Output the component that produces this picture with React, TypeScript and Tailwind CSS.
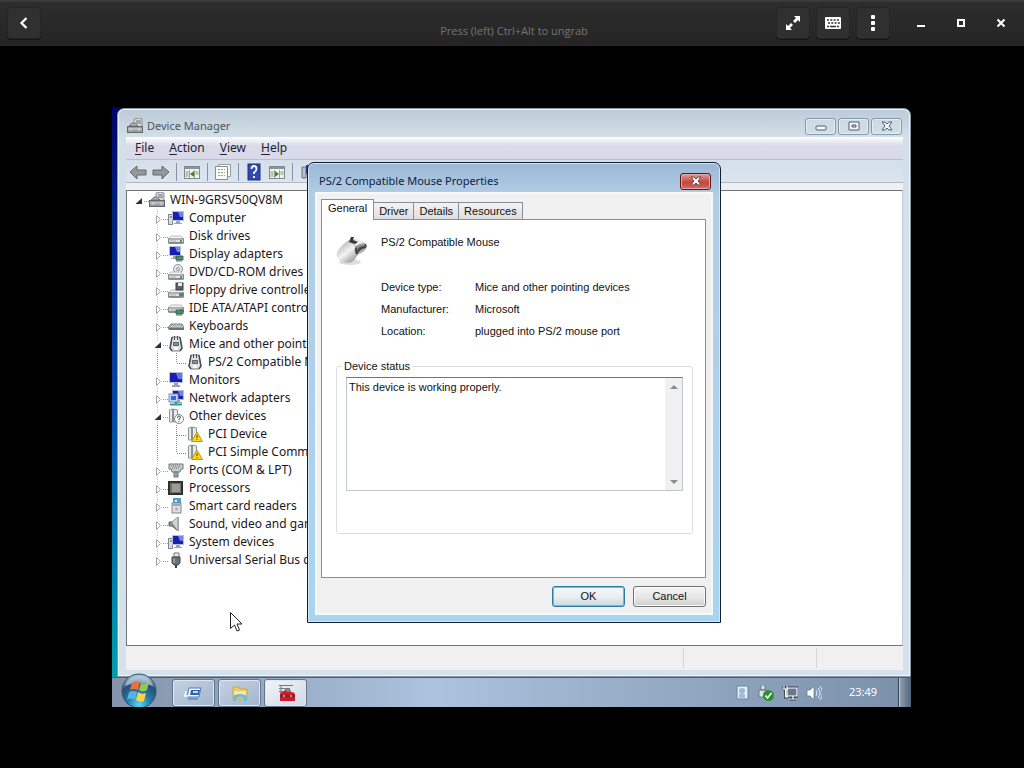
import React from "react";

type IconName =
  | "server" | "computer" | "disk" | "display" | "dvd" | "floppy" | "ide" | "keyboard" | "mouse"
  | "monitor" | "network" | "unknown" | "warning" | "port" | "cpu" | "card" | "sound" | "usb";

const Screen = ({ x = 3, y = 1 }: { x?: number; y?: number }) => (
  <g transform={`translate(${x} ${y})`}>
    <rect width="12" height="10" fill="#b4c0dc" />
    <rect x="1" y="1" width="10" height="8" fill="#1a1fb0" />
    <path d="M6 1h5v5H8z" fill="#6d86e6" />
    <path d="M4 10h4v2h2v1H2v-1h2z" fill="#97a3ad" />
  </g>
);

const Drive = ({ y = 8 }: { y?: number }) => (
  <g transform={`translate(0 ${y})`}>
    <path d="M3 0h10l3 3H0z" fill="#f4f5f5" stroke="#9da1a3" strokeWidth=".7" />
    <rect x=".5" y="3" width="15" height="4" fill="#dfe2e3" stroke="#7f8487" />
    <path d="M1 7h14" stroke="#5d6265" />
    <path d="M2 5h6" stroke="#aab0b3" />
    <rect x="12" y="4" width="2" height="2" fill="#4e9660" />
  </g>
);

const Chip = () => <path d="M8 10h7v4H8zM9 14v2M11 14v2M13 14v2" fill="#4c8d6a" stroke="#2e5945" strokeWidth=".8" />;

const art: Record<IconName, React.ReactNode> = {
  server: (
    <>
      <path d="M7 1l5-1 3 1v9H7z" fill="#d5d9db" stroke="#8b9195" />
      <path d="M9 3h5M9 5h5" stroke="#6f767b" />
      <path d="M2 8l3-3h3l3 3z" fill="#aeb4b7" stroke="#777" />
      <rect x=".5" y="8.500" width="15" height="6" fill="#979da0" stroke="#62686b" />
      <path d="M1 11h14M4 10v3M12 10v3" stroke="#d8dcde" />
    </>
  ),
  computer: (
    <>
      <rect x=".5" y="4.500" width="4" height="10" fill="#d9dde1" stroke="#80868d" />
      <path d="M2 7h2" stroke="#444" />
      <Screen x={4} y={1} />
    </>
  ),
  disk: <Drive />,
  display: (
    <>
      <Screen x={1} y={0} />
      <Chip />
    </>
  ),
  dvd: (
    <>
      <circle cx="10" cy="5" r="4.500" fill="#e3e7e9" stroke="#8d9295" />
      <circle cx="10" cy="5" r="1.500" fill="#fff" stroke="#8d9295" />
      <Drive />
    </>
  ),
  floppy: (
    <>
      <Drive />
      <rect x="8" y="1" width="7" height="7" fill="#5b6369" stroke="#3c4247" />
      <path d="M10 1h4v3h-4z" fill="#e9eced" />
      <rect x="11" y="11" width="4" height="3" fill="#4c8d6a" />
    </>
  ),
  ide: (
    <>
      <Drive y={5} />
      <Chip />
    </>
  ),
  keyboard: (
    <>
      <path d="M3 6h11l2 4H0z" fill="#d4d8da" stroke="#70767a" />
      <path d="M0 10h16v2H1z" fill="#6c7276" />
      <path d="M3 7.500h11M2 9h12" stroke="#8a9094" strokeDasharray="1 1" />
    </>
  ),
  mouse: (
    <>
      <path d="M4 1h8l1 6 1 5-2 3H4l-2-3 1-5z" fill="#dde0e1" stroke="#7b8083" />
      <path d="M4 1L3 7l-1 5 2 3M12 1l1 6 1 5-2 3" stroke="#494e51" strokeWidth="1.500" fill="none" />
      <path d="M6 0h1v4H6zM9 0h1v4H9z" fill="#4c5154" />
      <path d="M5.500 6.500h5v3h-5z" fill="#8d9396" stroke="#5c6164" />
      <path d="M6 11h4v3H6z" fill="#f7f8f8" />
    </>
  ),
  monitor: (
    <>
      <rect x="1" width="14" height="11" fill="#b4c0dc" />
      <rect x="2" y="1" width="12" height="9" fill="#1a1fb0" />
      <path d="M8 1h6v6h-4z" fill="#5f79dd" />
      <path d="M6 11h4v2h2v2H4v-2h2z" fill="#97a3ad" />
    </>
  ),
  network: (
    <>
      <Screen x={4} y={0} />
      <rect x="1" y="4" width="9" height="8" fill="#c3d3ec" stroke="#7d96bd" />
      <rect x="3" y="6" width="5" height="4" fill="#4263d4" />
      <path d="M8 12v2M2 14.500h12" stroke="#2f9d81" strokeWidth="2" />
    </>
  ),
  unknown: (
    <>
      <path d="M1.500 14V2l3-1v13zM5.500 14V1l4 1v12z" fill="#e6e9ea" stroke="#8a9094" />
      <circle cx="11" cy="11" r="4.500" fill="#fff" stroke="#7a858f" />
      <path d="M9.500 10q0-2 1.500-2t1.500 1.300Q12.500 10.500 11 11v1M11 13v1" fill="none" stroke="#32485f" />
    </>
  ),
  warning: (
    <>
      <path d="M1.500 14V2l3-1v13zM5.500 14V1l4 1v12z" fill="#e6e9ea" stroke="#8a9094" />
      <path d="M10 6l5.500 9.500h-11z" fill="#f4d91d" stroke="#b39a08" strokeLinejoin="round" />
      <path d="M10 9v3M10 13v1" stroke="#4d4300" />
    </>
  ),
  port: (
    <>
      <path d="M1 2h14v5h-2l-1 3H4L3 7H1z" fill="#c9cdcf" stroke="#6f7578" />
      <path d="M3 4h10M4 6h8" stroke="#5c6265" strokeDasharray="1 1" />
      <path d="M6 10h4v5H6z" fill="#9ba0a3" stroke="#6f7578" />
    </>
  ),
  cpu: (
    <>
      <rect x=".5" y="1.500" width="14" height="13" fill="#33342f" stroke="#2d2e29" />
      <rect x="2" y="3" width="11" height="10" fill="#6e6f67" />
      <rect x="4" y="4" width="8" height="8" fill="#9b9c93" />
    </>
  ),
  card: (
    <>
      <path d="M5 0h8v6H5z" fill="#4b9fcb" />
      <path d="M7 2h2v2H7z" fill="#e4eef2" />
      <path d="M4 5h9v10H4z" fill="#dce0e2" stroke="#80878b" />
      <path d="M5 7h7" stroke="#646b6f" />
      <circle cx="8.500" cy="11" r="1.500" fill="#a6aeb3" />
    </>
  ),
  sound: (
    <>
      <path d="M1 6h3l6-5v14l-6-5H1z" fill="#888e92" stroke="#5f6568" />
      <path d="M4 6l6-5v14z" fill="#cfd3d6" />
      <path d="M10 1v14" stroke="#8e9498" />
    </>
  ),
  usb: (
    <>
      <path d="M6 1h5v4H6z" fill="#e7e9ea" stroke="#777" />
      <path d="M4 5h8v6l-2 2H6l-2-2z" fill="#6b7073" stroke="#404447" />
      <path d="M8 13v3" stroke="#404447" strokeWidth="2" />
      <path d="M6 6v5" stroke="#b9bdc0" />
    </>
  ),
};

const DeviceIcon = ({ name }: { name: IconName }) => (
  <svg className="size-4 shrink-0" viewBox="0 0 16 16" aria-hidden="true">{art[name]}</svg>
);

type Row = { label: string; icon: IconName; level: 0 | 1 | 2; open?: boolean; last?: boolean };

const rows: Row[] = [
  { label: "WIN-9GRSV50QV8M", icon: "server", level: 0, open: true },
  { label: "Computer", icon: "computer", level: 1 },
  { label: "Disk drives", icon: "disk", level: 1 },
  { label: "Display adapters", icon: "display", level: 1 },
  { label: "DVD/CD-ROM drives", icon: "dvd", level: 1 },
  { label: "Floppy drive controllers", icon: "floppy", level: 1 },
  { label: "IDE ATA/ATAPI controllers", icon: "ide", level: 1 },
  { label: "Keyboards", icon: "keyboard", level: 1 },
  { label: "Mice and other pointing devices", icon: "mouse", level: 1, open: true },
  { label: "PS/2 Compatible Mouse", icon: "mouse", level: 2, last: true },
  { label: "Monitors", icon: "monitor", level: 1 },
  { label: "Network adapters", icon: "network", level: 1 },
  { label: "Other devices", icon: "unknown", level: 1, open: true },
  { label: "PCI Device", icon: "warning", level: 2 },
  { label: "PCI Simple Communications Controller", icon: "warning", level: 2, last: true },
  { label: "Ports (COM & LPT)", icon: "port", level: 1 },
  { label: "Processors", icon: "cpu", level: 1 },
  { label: "Smart card readers", icon: "card", level: 1 },
  { label: "Sound, video and game controllers", icon: "sound", level: 1 },
  { label: "System devices", icon: "computer", level: 1 },
  { label: "Universal Serial Bus controllers", icon: "usb", level: 1, last: true },
];

const TreeRow = ({ row }: { row: Row }) => (
  <li className={`flex h-[18px] items-center ${row.level === 0 ? "pl-1.5" : "pl-[25px]"}`}>
    <svg className="h-[18px] w-4 shrink-0" viewBox="0 0 16 18" aria-hidden="true">
      {row.level > 0 && (
        <path d={row.last && row.level === 1 ? "M5.500 0v5" : "M5.500 0v18"} stroke={row.level === 2 ? "#888" : "#c4c4c4"} strokeDasharray="1 1" />
      )}
      {row.level < 2 && (
        <>
          <path d="M11 10.500h5" stroke="#999" strokeDasharray="1 1" />
          {row.open ? (
            <>
              <rect x="2" y="6" width="8" height="8" fill="#fff" />
              <path d="M9 7v6H2.500z" fill="#303030" />
            </>
          ) : (
            <>
              <rect x="3" y="5" width="7" height="11" fill="#fff" />
              <path d="M4.500 6.500v8l4-4z" fill="#fff" stroke="#a3a3a3" />
            </>
          )}
        </>
      )}
    </svg>
    {row.level === 2 && (
      <svg className="h-[18px] w-[19px] shrink-0" viewBox="0 0 19 18" aria-hidden="true">
        <path d={row.last ? "M8.500 0v10M9 10.500h9" : "M8.500 0v18M9 10.500h9"} stroke="#888" strokeDasharray="1 1" fill="none" />
      </svg>
    )}
    <DeviceIcon name={row.icon} />
    <span className="pl-[5px] whitespace-nowrap">{row.label}</span>
  </li>
);

const HeaderButton = ({ label, children }: { label: string; children: React.ReactNode }) => (
  <button aria-label={label} className="flex h-8 w-[34px] items-center justify-center rounded-sm border border-[#252525] bg-[#303030] text-white shadow-[0_1px_0_#151515]">
    {children}
  </button>
);

const PlainButton = ({ label, children }: { label: string; children: React.ReactNode }) => (
  <button aria-label={label} className="flex h-8 w-10 items-center justify-center text-white">{children}</button>
);

const ViewerHeader = () => (
  <header className="grid h-[46px] shrink-0 grid-cols-[1fr_auto_1fr] items-center border-t-2 border-[#3b3b3b] bg-linear-to-b from-[#2d2d2d] to-[#252525] pr-[3px] pb-0.5 pl-[7px]">
    <div className="flex">
      <HeaderButton label="Back">
        <svg className="size-4" viewBox="0 0 16 16"><path d="M10.500 3L5.500 8l5 5" fill="none" stroke="currentColor" strokeWidth="2.200" /></svg>
      </HeaderButton>
    </div>
    <p className="pt-4 font-['Open_Sans',sans-serif] text-[11px] leading-4 text-[#757575]">Press (left) Ctrl+Alt to ungrab</p>
    <div className="flex items-center justify-end">
      <div className="flex gap-1.5 pr-[11px]">
        <HeaderButton label="Fullscreen">
          <svg className="size-4" viewBox="0 0 16 16" fill="currentColor">
            <path d="M9 1h6v6l-2-2-3 3-2-2 3-3zM7 15H1V9l2 2 3-3 2 2-3 3z" />
          </svg>
        </HeaderButton>
        <HeaderButton label="Keyboard">
          <svg className="size-4" viewBox="0 0 16 16">
            <rect y="2" width="16" height="12" rx="1" fill="currentColor" />
            <path d="M2 5h12M3 8h12" stroke="#303030" strokeWidth="1.600" strokeDasharray="2 1.300" />
            <path d="M2 11.500h2M5 11.500h6M12 11.500h2" stroke="#303030" strokeWidth="1.600" />
          </svg>
        </HeaderButton>
        <HeaderButton label="Menu">
          <svg className="size-4" viewBox="0 0 16 16" fill="currentColor">
            <rect x="6" width="4" height="4" rx="1" /><rect x="6" y="6" width="4" height="4" rx="1" /><rect x="6" y="12" width="4" height="4" rx="1" />
          </svg>
        </HeaderButton>
      </div>
      <PlainButton label="Minimize"><svg className="size-4" viewBox="0 0 16 16"><path d="M4 11h8" stroke="currentColor" strokeWidth="2" /></svg></PlainButton>
      <PlainButton label="Maximize"><svg className="size-4" viewBox="0 0 16 16"><rect x="5" y="5" width="6" height="6" fill="none" stroke="currentColor" strokeWidth="2" /></svg></PlainButton>
      <PlainButton label="Close"><svg className="size-4" viewBox="0 0 16 16"><path d="M4.500 4.500l7 7M11.500 4.500l-7 7" stroke="currentColor" strokeWidth="2" /></svg></PlainButton>
    </div>
  </header>
);

const CaptionButton = ({ label, children }: { label: string; children: React.ReactNode }) => (
  <button aria-label={label} className="flex h-[17px] w-[31px] items-center justify-center rounded-[3px] border border-[#8899a9] bg-[#d0dfea]/60 shadow-[inset_0_0_0_1px_#e3edf4]">
    <svg className="h-3 w-4" viewBox="0 0 16 12" fill="#f5f9fc" stroke="#4c5c6c">{children}</svg>
  </button>
);

const menus = [["F", "ile"], ["A", "ction"], ["V", "iew"], ["H", "elp"]];

const Separator = () => <span className="mx-1.5 h-[18px] w-px bg-[#8b93a8]" />;

const ToolIcon = ({ label, children }: { label: string; children: React.ReactNode }) => (
  <button aria-label={label} className="size-[18px] shrink-0"><svg className="size-[18px]" viewBox="0 0 18 18">{children}</svg></button>
);

const PaneArt = ({ flip }: { flip?: boolean }) => (
  <>
    <rect x="1.500" y="3.500" width="15" height="12" fill="#f2f4f1" stroke="#808a8c" />
    <path d="M2 5h14" stroke="#8995a2" strokeWidth="2" />
    <path d="M6.500 7v8M11.500 7v8" stroke="#9aa39f" />
    <path d="M2.500 9h3M2.500 11h3M2.500 13h3M12.500 9h3M12.500 11h3" stroke="#7e9377" />
    <path d={flip ? "M7 8l4 3-4 3z" : "M11 8l-4 3 4 3z"} fill="#37872e" />
  </>
);

const DeviceManager = () => (
  <section className="absolute top-px right-px bottom-[30px] left-[5px] flex flex-col rounded-t-[7px] border border-[#8997a4] bg-linear-to-b from-[#bccad7] via-[#d3e0e9] via-5% to-[#d6e2eb] pr-[7px] pb-1.5 pl-2 shadow-[inset_0_0_0_1px_#eef4f8]">
    <div className="flex h-7 shrink-0 items-center justify-between pt-1.5 pr-px pl-px">
      <h1 className="flex items-center gap-1 text-[11px] text-[#4a5560]"><DeviceIcon name="server" />Device Manager</h1>
      <div className="flex gap-0.5">
        <CaptionButton label="Minimize"><rect x="3" y="6" width="10" height="4" rx="1" /></CaptionButton>
        <CaptionButton label="Restore"><path fillRule="evenodd" d="M3 2h10v8H3zM6 5h4v2H6z" /></CaptionButton>
        <CaptionButton label="Close"><path d="M3 2h3l2 2 2-2h3l-3 4 3 4h-3L8 8l-2 2H3l3-4z" /></CaptionButton>
      </div>
    </div>
    <nav className="flex h-[23px] shrink-0 items-center border-b border-[#b9bfcd] bg-linear-to-b from-white via-[#d8dbea] via-40% to-[#d8daea] pl-[9px] text-[#26202c]">
      {menus.map(([key, rest], i) => (
        <button key={rest} className={i === 0 ? "" : "pl-[15px]"}><span className="underline underline-offset-2">{key}</span>{rest}</button>
      ))}
    </nav>
    <div className="flex h-[23px] shrink-0 items-center border-b border-[#aeb8c8] bg-linear-to-b from-[#d4dfea] to-[#dce6f0] pt-px pl-[3px]">
      <div className="flex gap-[5px]">
        <ToolIcon label="Back"><path d="M1 9l7-6v4h9v5H8v4z" fill="#96999c" stroke="#65696d" /></ToolIcon>
        <ToolIcon label="Forward"><path d="M17 9l-7-6v4H1v5h9v4z" fill="#96999c" stroke="#65696d" /></ToolIcon>
      </div>
      <Separator />
      <ToolIcon label="Show console tree"><PaneArt /></ToolIcon>
      <Separator />
      <ToolIcon label="Properties">
        <path d="M4.500 1.500h12v12h-12z" fill="#f7f7f5" stroke="#999f9c" />
        <path d="M1.500 3.500h12v13h-12z" fill="#fafaf8" stroke="#878e8b" />
        <path d="M4 6.500h7M4 9.500h7M4 12.500h7" stroke="#8e9e90" strokeDasharray="2 1" />
      </ToolIcon>
      <Separator />
      <div className="flex gap-[5px]">
        <ToolIcon label="Help">
          <rect x="3" y="1" width="12" height="16" fill="#2e49b2" stroke="#1e2f84" />
          <path d="M6.500 6q0-3 2.500-3t2.500 3q0 2-2.500 3.500V11M9 13v2" fill="none" stroke="#fff" strokeWidth="1.800" />
        </ToolIcon>
        <ToolIcon label="Show action pane"><PaneArt flip /></ToolIcon>
      </div>
      <Separator />
      <ToolIcon label="Scan for hardware changes"><path d="M3 4h4v11H3z" fill="#b9c0c6" stroke="#6a7279" /><path d="M7 2h9v9H7z" fill="#2b399c" /></ToolIcon>
    </div>
    <div className="flex min-h-0 grow flex-col bg-[#f0f0f0] pt-[7px]">
      <div className="min-h-0 grow overflow-hidden border border-[#70747a] border-r-[#c5ccd4] bg-white">
        <ul className="text-[#1c1620]">{rows.map((row) => <TreeRow key={row.label} row={row} />)}</ul>
      </div>
      <footer className="flex h-6 shrink-0 justify-end py-0.5">
        <span className="w-[133px] border-l border-[#d5d5d5]" />
        <span className="w-[87px] border-l border-[#d5d5d5]" />
      </footer>
    </div>
  </section>
);

const facts = [
  ["Device type:", "Mice and other pointing devices"],
  ["Manufacturer:", "Microsoft"],
  ["Location:", "plugged into PS/2 mouse port"],
];

const Tab = ({ children }: { children: React.ReactNode }) => (
  <button role="tab" aria-selected="false" className="h-[17px] border border-b-0 border-l-0 border-[#8b8e94] bg-linear-to-b from-[#f3f3f3] to-[#dedede] px-[5px] leading-4">{children}</button>
);

const PropertiesDialog = () => (
  <section role="dialog" aria-label="PS/2 Compatible Mouse Properties" className="absolute top-[55px] left-[195px] flex h-[461px] w-[414px] flex-col rounded-t-[7px] border border-[#10202e] bg-linear-to-b from-[#9bb8d5] via-[#b3cde6] via-7% to-[#a9d4f0] px-[7px] pb-[7px] shadow-[inset_0_0_0_1px_#d4e6f5]">
    <div className="flex h-[29px] shrink-0 items-center justify-between pt-[7px] pr-0.5 pl-1">
      <h2 className="text-[11px] text-[#0f1e3c]">PS/2 Compatible Mouse Properties</h2>
      <button aria-label="Close" className="flex h-[17px] w-[31px] items-center justify-center rounded-[3px] border border-[#55171c] bg-linear-to-b from-[#df9d96] via-[#c1463d] via-55% to-[#d86b5d] shadow-[inset_0_0_0_1px_#e9aaa5]">
        <svg className="h-3 w-4" viewBox="0 0 16 12"><path d="M3 2h3l2 2 2-2h3l-3 4 3 4h-3L8 8l-2 2H3l3-4z" fill="#fff" stroke="#6b4545" /></svg>
      </button>
    </div>
    <div className="flex grow flex-col border-2 border-[#f5f9fc] bg-[#f0f0f0] pt-[5px] pr-[5px] pl-1 font-['Liberation_Sans',sans-serif] text-[11px] text-[#111]">
      <div role="tablist" className="flex items-end">
        <button role="tab" aria-selected="true" className="relative -mb-px h-[21px] border border-b-0 border-[#8b8e94] bg-white px-1.5 pb-1">General</button>
        <Tab>Driver</Tab>
        <Tab>Details</Tab>
        <Tab>Resources</Tab>
      </div>
      <div role="tabpanel" className="flex h-[359px] flex-col border border-[#8b8e94] bg-white px-3.5 pt-4">
        <div className="flex gap-[13px]">
          <svg className="size-8 shrink-0" viewBox="0 0 32 32" aria-hidden="true">
            <defs>
              <linearGradient id="shell" x1="0" y1="0" x2="1" y2="1"><stop offset="0" stopColor="#999" /><stop offset=".45" stopColor="#f2f2f2" /><stop offset="1" stopColor="#555" /></linearGradient>
            </defs>
            <ellipse cx="14" cy="26" rx="11" ry="3" fill="#dedede" />
            <path d="M11 5Q18 1 26 5q5 2 5 6-2 5-8 7-3 2-4 5-5 6-12 3-8-3-6-9 1-4 10-12z" fill="url(#shell)" />
            <path d="M19 12q4-5 11-4 1 2 0 4-6 1-9 7-3-2-2-7z" fill="#4b4b4b" />
            <path d="M21 10q3-3 8-2l-1 2q-5 0-7 4z" fill="#989898" />
            <path d="M12 6q6 0 8 6" fill="none" stroke="#aaa" />
            <path d="M15 1h3l-1 3 5 2-3 2-6-2z" fill="#3a3a3a" />
          </svg>
          <p className="leading-[13px]">PS/2 Compatible Mouse</p>
        </div>
        <dl className="grid grid-cols-[94px_1fr] gap-y-2 pt-3 pl-[45px] leading-[14px]">
          {facts.map(([term, value]) => (
            <React.Fragment key={term}><dt>{term}</dt><dd>{value}</dd></React.Fragment>
          ))}
        </dl>
        <fieldset className="mt-[21px] -mr-[3px] ml-0 h-[175px] max-w-[357px] rounded-[3px] border border-[#dcdfe2] px-[9px]">
          <legend className="-ml-1 px-0.5 leading-[14px]"><label htmlFor="status">Device status</label></legend>
          <div className="mt-1 flex h-[114px] border border-[#c3c7cb] border-t-[#70757b]">
            <textarea id="status" readOnly value="This device is working properly." className="min-w-0 grow resize-none overflow-hidden px-0.5 py-0.5 leading-[14px] outline-none" />
            <div className="flex w-[17px] shrink-0 flex-col justify-between bg-[#f0f0f0]">
              <button aria-label="Scroll up" className="flex h-[17px] items-center justify-center"><svg className="size-2" viewBox="0 0 8 8"><path d="M0 6l4-4 4 4z" fill="#858b91" /></svg></button>
              <button aria-label="Scroll down" className="flex h-[17px] items-center justify-center"><svg className="size-2" viewBox="0 0 8 8"><path d="M0 2l4 4 4-4z" fill="#858b91" /></svg></button>
            </div>
          </div>
        </fieldset>
      </div>
      <div className="flex justify-end gap-2 pt-2">
        <button className="h-[21px] w-[73px] rounded-[3px] border border-[#2c7ca6] bg-linear-to-b from-[#f4f8fa] via-[#e9eff2] to-[#ccd9df] shadow-[inset_0_0_0_1px_#54c8ec]">OK</button>
        <button className="h-[21px] w-[73px] rounded-[3px] border border-[#707070] bg-linear-to-b from-[#f4f4f4] via-[#e8e8e8] to-[#cfcfcf] shadow-[inset_0_0_0_1px_#fafafa]">Cancel</button>
      </div>
    </div>
  </section>
);

const TaskButton = ({ label, active, children }: { label: string; active?: boolean; children: React.ReactNode }) => (
  <button aria-label={label} className={`flex h-7 w-[43px] items-center justify-center rounded-[3px] border border-[#63758c] shadow-[inset_0_0_0_1px_#dde6f1] ${active ? "bg-linear-to-br from-[#f0f4f8] to-[#cfdae6]" : "bg-linear-to-br from-[#c4d1e2] to-[#a3b6cf]"}`}>
    <svg className="size-5" viewBox="0 0 20 20">{children}</svg>
  </button>
);

const TrayIcon = ({ children }: { children: React.ReactNode }) => (
  <svg className="size-4" viewBox="0 0 16 16" aria-hidden="true">{children}</svg>
);

const Taskbar = () => (
  <footer className="absolute right-px bottom-0 left-0 flex h-[30px] items-center border-t border-[#4c5e75] bg-linear-to-r from-[#8493aa] via-[#abc3df] via-40% to-[#7b8fa9]">
    <button aria-label="Start" className="-mt-1 ml-[9px] size-9 shrink-0">
      <svg className="size-9" viewBox="0 0 36 36">
        <defs>
          <radialGradient id="orb" cx=".5" cy=".9" r=".85"><stop offset="0" stopColor="#54dcf5" /><stop offset=".4" stopColor="#247ba8" /><stop offset=".75" stopColor="#255178" /><stop offset="1" stopColor="#a5bdcf" /></radialGradient>
        </defs>
        <circle cx="18" cy="18" r="17" fill="url(#orb)" stroke="#31516f" />
        <path d="M4 13Q8 3 18 3t14 10Q18 7 4 13z" fill="#d8e6ef" opacity=".55" />
        <path d="M11 10q4-3 8-1l-2 8q-4-2-8 0z" fill="#ee703b" />
        <path d="M20 10q4 2 8-1l-2 8q-4 3-8 0z" fill="#92c954" />
        <path d="M8 19q4-2 8 0l-2 8q-4-3-8 0z" fill="#5ab0e8" />
        <path d="M17 19q4 3 8 1l-2 8q-4 2-8-1z" fill="#fbd34a" />
      </svg>
    </button>
    <div className="flex gap-[3px] pl-[15px]">
      <TaskButton label="Server Manager">
        <path d="M5 5h12l-2 9H3z" fill="#f3f7fc" stroke="#527bad" />
        <path d="M7 7h9l-1 5H6z" fill="#2d67ab" />
        <path d="M9 9h5M2 8l-1 5h3" stroke="#fff" strokeWidth="1.500" fill="none" />
        <path d="M4 16h10" stroke="#3d70ae" />
      </TaskButton>
      <TaskButton label="Windows Explorer">
        <path d="M3 4h6l1 2h7v10H3z" fill="#eccb62" stroke="#d0a94a" />
        <path d="M4 8h12v4H4z" fill="#f8e9a6" />
        <path d="M3 18v-5q7-4 14 0v5h-3v-3q-4-2-8 0v3z" fill="#6fb9d9" />
      </TaskButton>
      <TaskButton label="Device Manager" active>
        <path d="M3 2.500h14M3 5.500h11M3 8.500h10M5 2v8" stroke="#737b82" fill="none" />
        <path d="M4 11q0-2 3-2h8q4 0 4 3v6H4z" fill="#c51f2d" />
        <path d="M9 9V7h5v2M4 13h15" fill="none" stroke="#681119" />
        <path d="M8 12v2M15 12v2" stroke="#fff" />
      </TaskButton>
    </div>
    <div className="ml-auto flex h-full items-center gap-2">
      <TrayIcon><path d="M3 1h11v13H3z" fill="#e6edf5" stroke="#6b82a0" /><circle cx="8" cy="6" r="3" fill="#9bb8d8" /><path d="M5 10h6M5 12h6" stroke="#708cab" /></TrayIcon>
      <TrayIcon><path d="M3 0h4v5H3zM1 5h7v7H1z" fill="#dce3e6" stroke="#6c7c84" /><circle cx="10.500" cy="10.500" r="5.500" fill="#29942e" /><path d="M7.500 10.500l2 2.500 4-5" fill="none" stroke="#fff" strokeWidth="1.600" /></TrayIcon>
      <TrayIcon><path d="M5 3h10v8H5zM8 14h6M11 11v3M2 1v3M5 1v3M1 4h5M3.500 4v8H6" fill="none" stroke="#303943" strokeWidth="3" /><path d="M5 3h10v8H5zM8 14h6M11 11v3M2 1v3M5 1v3M1 4h5M3.500 4v8H6" fill="#66798e" stroke="#fff" strokeWidth="1.200" /></TrayIcon>
      <TrayIcon><path d="M1 5h3l4-4v14l-4-4H1z" fill="#fff" stroke="#5e6f82" strokeWidth=".7" /><path d="M10 5q2 3 0 6M12 3q4 5 0 10M14 1q5 7 0 14" fill="none" stroke="#e5edf5" /></TrayIcon>
    </div>
    <time className="w-[76px] pl-1.5 text-center text-[11px] text-white">23:49</time>
    <button aria-label="Show desktop" className="h-full w-[13px] border-l border-[#36475c] bg-linear-to-r from-[#94a3b5] to-[#53657b] shadow-[inset_1px_0_0_#b6c4d3]" />
  </footer>
);

export default function App() {
  return (
    <div className="flex min-h-screen flex-col bg-black font-['Noto_Sans',sans-serif] text-xs">
      <ViewerHeader />
      <main className="flex grow items-center justify-center">
        <div className="relative h-[600px] w-full max-w-[800px] overflow-hidden">
          <div className="absolute inset-y-0 left-0 w-2 bg-linear-to-b from-[#02026e] via-[#0747a8] to-[#0ba8ad]" />
          <DeviceManager />
          <PropertiesDialog />
          <Taskbar />
          <svg className="absolute top-[505px] left-[118px] h-5 w-3" viewBox="0 0 12 20" aria-hidden="true">
            <path d="M.5 .5v16l4-3.500 2.500 6 2.500-1-2.500-6h5z" fill="#fff" stroke="#222" />
          </svg>
        </div>
      </main>
    </div>
  );
}
